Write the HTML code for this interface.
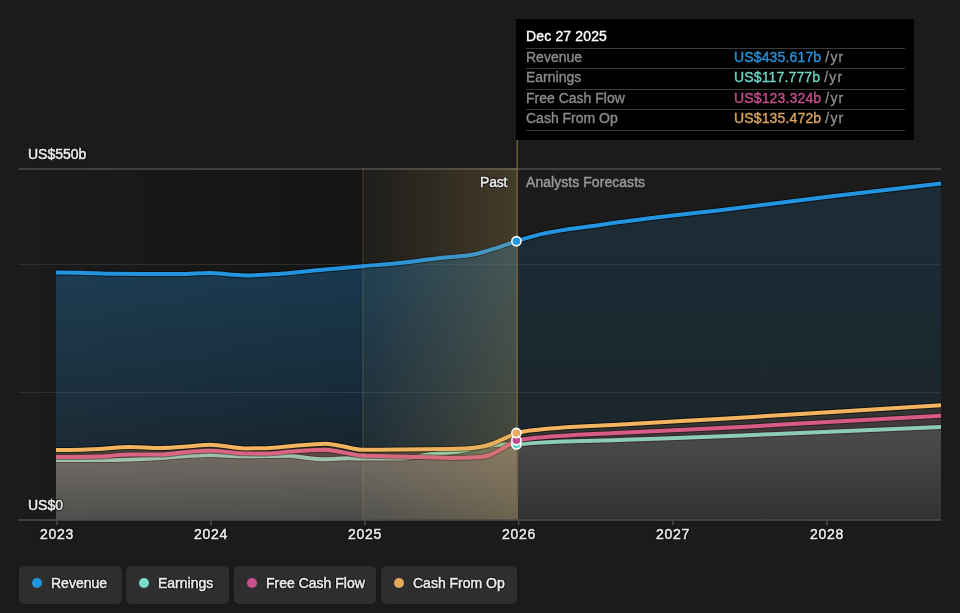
<!DOCTYPE html>
<html><head><meta charset="utf-8">
<style>
html,body{margin:0;padding:0;}
body{width:960px;height:613px;background:#1b1b1b;position:relative;overflow:hidden;font-family:"Liberation Sans",sans-serif;}
.t{position:absolute;white-space:nowrap;line-height:1;will-change:transform;}
.tip div{-webkit-text-stroke-width:0.35px;}
.ax{color:#ececec;font-size:14px;text-shadow:1px 0 1px #000,-1px 0 1px #000,0 1px 1px #000,0 -1px 1px #000;-webkit-text-stroke:0.5px #ececec;}
.yr4{letter-spacing:0.7px;}
.tip{position:absolute;left:516px;top:19px;width:398px;height:121px;background:#000;}
.tip .sep{position:absolute;left:10px;width:379px;height:1.5px;background:#3a3a3a;}
.tip .lab{will-change:transform;position:absolute;left:10px;color:#8c8c8c;font-size:14px;line-height:1;}
.tip .val{will-change:transform;position:absolute;left:218px;font-size:14px;line-height:1;letter-spacing:0.15px;}
.tip .yr{color:#8c8c8c;letter-spacing:1.2px;}
.leg{position:absolute;top:566px;height:38px;background:#2e2e2e;border-radius:5px;}
.leg .dot{position:absolute;left:13px;top:11.5px;width:10px;height:10px;border-radius:50%;}
.leg .lt{will-change:transform;position:absolute;left:32px;top:9.5px;color:#ececec;font-size:14px;line-height:1;-webkit-text-stroke:0.5px #ececec;text-shadow:1px 0 1px #000,-1px 0 1px #000,0 1px 1px #000,0 -1px 1px #000;}
</style></head><body>
<svg width="960" height="613" viewBox="0 0 960 613" style="position:absolute;left:0;top:0">
<defs>
<linearGradient id="gp_rev" gradientUnits="userSpaceOnUse" x1="0" y1="241" x2="0" y2="520"><stop offset="0" stop-color="#2394df" stop-opacity="0.310"/><stop offset="1" stop-color="#2394df" stop-opacity="0.070"/></linearGradient>
<linearGradient id="gf_rev" gradientUnits="userSpaceOnUse" x1="0" y1="241" x2="0" y2="520"><stop offset="0" stop-color="#2394df" stop-opacity="0.130"/><stop offset="1" stop-color="#2394df" stop-opacity="0.070"/></linearGradient>
<linearGradient id="gp_ern" gradientUnits="userSpaceOnUse" x1="0" y1="440" x2="0" y2="520"><stop offset="0" stop-color="#78dcc8" stop-opacity="0.300"/><stop offset="1" stop-color="#78dcc8" stop-opacity="0.170"/></linearGradient>
<linearGradient id="gf_ern" gradientUnits="userSpaceOnUse" x1="0" y1="440" x2="0" y2="520"><stop offset="0" stop-color="#78dcc8" stop-opacity="0.120"/><stop offset="1" stop-color="#78dcc8" stop-opacity="0.030"/></linearGradient>
<linearGradient id="gp_fcf" gradientUnits="userSpaceOnUse" x1="0" y1="436" x2="0" y2="520"><stop offset="0" stop-color="#d4508e" stop-opacity="0.200"/><stop offset="1" stop-color="#d4508e" stop-opacity="0.100"/></linearGradient>
<linearGradient id="gf_fcf" gradientUnits="userSpaceOnUse" x1="0" y1="436" x2="0" y2="520"><stop offset="0" stop-color="#d4508e" stop-opacity="0.100"/><stop offset="1" stop-color="#d4508e" stop-opacity="0.040"/></linearGradient>
<linearGradient id="gp_cfo" gradientUnits="userSpaceOnUse" x1="0" y1="432" x2="0" y2="520"><stop offset="0" stop-color="#f2b45e" stop-opacity="0.230"/><stop offset="1" stop-color="#f2b45e" stop-opacity="0.100"/></linearGradient>
<linearGradient id="gf_cfo" gradientUnits="userSpaceOnUse" x1="0" y1="432" x2="0" y2="520"><stop offset="0" stop-color="#f2b45e" stop-opacity="0.100"/><stop offset="1" stop-color="#f2b45e" stop-opacity="0.050"/></linearGradient>
<linearGradient id="darkpast" x1="0" y1="0" x2="1" y2="0"><stop offset="0" stop-color="#000" stop-opacity="0"/><stop offset="1" stop-color="#000" stop-opacity="0.27"/></linearGradient>
<linearGradient id="goldpast" x1="0" y1="0" x2="1" y2="0"><stop offset="0" stop-color="#c8a050" stop-opacity="0.015"/><stop offset="1" stop-color="#c8a050" stop-opacity="0.24"/></linearGradient>
</defs>
<rect x="18" y="168" width="345" height="352" fill="url(#darkpast)"/>
<rect x="18.5" y="264" width="922.5" height="1" fill="#2e2e2e"/>
<rect x="18.5" y="392" width="922.5" height="1" fill="#2e2e2e"/>
<rect x="18.5" y="168.2" width="922.5" height="1.6" fill="#4a4a4a"/>
<path d="M56.00,272.50 C64.00,272.57 72.00,272.65 80.00,272.80 C91.67,273.02 103.33,273.73 115.00,273.80 C136.67,273.93 158.33,274.00 180.00,274.00 C190.00,274.00 200.00,273.00 210.00,273.00 C216.67,273.00 223.33,274.06 230.00,274.50 C235.67,274.88 241.33,275.50 247.00,275.50 C258.00,275.50 269.00,274.58 280.00,273.80 C293.33,272.85 306.67,271.22 320.00,270.00 C334.33,268.68 348.67,267.45 363.00,266.20 C375.33,265.12 387.67,264.29 400.00,263.00 C413.33,261.60 426.67,259.53 440.00,258.00 C451.67,256.66 463.33,256.77 475.00,254.30 C480.67,253.10 486.33,251.16 492.00,249.40 C500.17,246.86 508.33,243.93 516.50,241.00 L516.5,520 L56.0,520 Z" fill="url(#gp_rev)"/>
<path d="M516.50,241.00 C524.33,238.66 532.17,236.33 540.00,234.40 C560.00,229.48 580.00,227.88 600.00,225.00 C620.00,222.12 640.00,219.57 660.00,217.10 C680.00,214.63 700.00,212.56 720.00,210.20 C756.67,205.87 793.33,201.03 830.00,196.60 C867.00,192.13 904.00,187.81 941.00,183.50 L941.0,520 L516.5,520 Z" fill="url(#gf_rev)"/>
<path d="M56.00,272.50 C64.00,272.57 72.00,272.65 80.00,272.80 C91.67,273.02 103.33,273.73 115.00,273.80 C136.67,273.93 158.33,274.00 180.00,274.00 C190.00,274.00 200.00,273.00 210.00,273.00 C216.67,273.00 223.33,274.06 230.00,274.50 C235.67,274.88 241.33,275.50 247.00,275.50 C258.00,275.50 269.00,274.58 280.00,273.80 C293.33,272.85 306.67,271.22 320.00,270.00 C334.33,268.68 348.67,267.45 363.00,266.20 C375.33,265.12 387.67,264.29 400.00,263.00 C413.33,261.60 426.67,259.53 440.00,258.00 C451.67,256.66 463.33,256.77 475.00,254.30 C480.67,253.10 486.33,251.16 492.00,249.40 C500.17,246.86 508.33,243.93 516.50,241.00 L516.50,241.00 C524.33,238.66 532.17,236.33 540.00,234.40 C560.00,229.48 580.00,227.88 600.00,225.00 C620.00,222.12 640.00,219.57 660.00,217.10 C680.00,214.63 700.00,212.56 720.00,210.20 C756.67,205.87 793.33,201.03 830.00,196.60 C867.00,192.13 904.00,187.81 941.00,183.50" fill="none" stroke="#000" stroke-opacity="0.55" stroke-width="6.0" stroke-linejoin="round"/>
<path d="M56.00,272.50 C64.00,272.57 72.00,272.65 80.00,272.80 C91.67,273.02 103.33,273.73 115.00,273.80 C136.67,273.93 158.33,274.00 180.00,274.00 C190.00,274.00 200.00,273.00 210.00,273.00 C216.67,273.00 223.33,274.06 230.00,274.50 C235.67,274.88 241.33,275.50 247.00,275.50 C258.00,275.50 269.00,274.58 280.00,273.80 C293.33,272.85 306.67,271.22 320.00,270.00 C334.33,268.68 348.67,267.45 363.00,266.20 C375.33,265.12 387.67,264.29 400.00,263.00 C413.33,261.60 426.67,259.53 440.00,258.00 C451.67,256.66 463.33,256.77 475.00,254.30 C480.67,253.10 486.33,251.16 492.00,249.40 C500.17,246.86 508.33,243.93 516.50,241.00 L516.50,241.00 C524.33,238.66 532.17,236.33 540.00,234.40 C560.00,229.48 580.00,227.88 600.00,225.00 C620.00,222.12 640.00,219.57 660.00,217.10 C680.00,214.63 700.00,212.56 720.00,210.20 C756.67,205.87 793.33,201.03 830.00,196.60 C867.00,192.13 904.00,187.81 941.00,183.50" fill="none" stroke="#2394df" stroke-width="4.0" stroke-linejoin="round"/>
<path d="M56.00,460.00 C70.67,460.00 85.33,460.00 100.00,460.00 C110.00,460.00 120.00,459.83 130.00,459.50 C140.00,459.17 150.00,458.62 160.00,458.00 C170.00,457.38 180.00,456.33 190.00,455.80 C196.67,455.44 203.33,455.00 210.00,455.00 C221.67,455.00 233.33,456.30 245.00,456.30 C260.00,456.30 275.00,455.80 290.00,455.80 C293.33,455.80 296.67,456.63 300.00,457.00 C308.33,457.92 316.67,459.20 325.00,459.20 C333.33,459.20 341.67,458.30 350.00,458.30 C354.00,458.30 358.00,458.60 362.00,458.60 C374.67,458.60 387.33,458.60 400.00,458.60 C410.00,458.60 420.00,455.52 430.00,454.30 C440.00,453.08 450.00,452.77 460.00,451.30 C470.00,449.83 480.00,446.63 490.00,445.50 C495.00,444.93 500.00,444.40 505.00,444.40 C508.83,444.40 512.67,444.40 516.50,444.40 L516.5,520 L56.0,520 Z" fill="url(#gp_ern)"/>
<path d="M516.50,444.40 C521.00,443.96 525.50,443.52 530.00,443.20 C562.00,440.93 594.00,440.96 626.00,439.80 C662.67,438.47 699.33,437.18 736.00,435.70 C757.33,434.84 778.67,433.91 800.00,433.00 C847.00,431.00 894.00,428.95 941.00,426.90 L941.0,520 L516.5,520 Z" fill="url(#gf_ern)"/>
<path d="M56.00,460.00 C70.67,460.00 85.33,460.00 100.00,460.00 C110.00,460.00 120.00,459.83 130.00,459.50 C140.00,459.17 150.00,458.62 160.00,458.00 C170.00,457.38 180.00,456.33 190.00,455.80 C196.67,455.44 203.33,455.00 210.00,455.00 C221.67,455.00 233.33,456.30 245.00,456.30 C260.00,456.30 275.00,455.80 290.00,455.80 C293.33,455.80 296.67,456.63 300.00,457.00 C308.33,457.92 316.67,459.20 325.00,459.20 C333.33,459.20 341.67,458.30 350.00,458.30 C354.00,458.30 358.00,458.60 362.00,458.60 C374.67,458.60 387.33,458.60 400.00,458.60 C410.00,458.60 420.00,455.52 430.00,454.30 C440.00,453.08 450.00,452.77 460.00,451.30 C470.00,449.83 480.00,446.63 490.00,445.50 C495.00,444.93 500.00,444.40 505.00,444.40 C508.83,444.40 512.67,444.40 516.50,444.40 L516.50,444.40 C521.00,443.96 525.50,443.52 530.00,443.20 C562.00,440.93 594.00,440.96 626.00,439.80 C662.67,438.47 699.33,437.18 736.00,435.70 C757.33,434.84 778.67,433.91 800.00,433.00 C847.00,431.00 894.00,428.95 941.00,426.90" fill="none" stroke="#000" stroke-opacity="0.55" stroke-width="6.0" stroke-linejoin="round"/>
<path d="M56.00,460.00 C70.67,460.00 85.33,460.00 100.00,460.00 C110.00,460.00 120.00,459.83 130.00,459.50 C140.00,459.17 150.00,458.62 160.00,458.00 C170.00,457.38 180.00,456.33 190.00,455.80 C196.67,455.44 203.33,455.00 210.00,455.00 C221.67,455.00 233.33,456.30 245.00,456.30 C260.00,456.30 275.00,455.80 290.00,455.80 C293.33,455.80 296.67,456.63 300.00,457.00 C308.33,457.92 316.67,459.20 325.00,459.20 C333.33,459.20 341.67,458.30 350.00,458.30 C354.00,458.30 358.00,458.60 362.00,458.60 C374.67,458.60 387.33,458.60 400.00,458.60 C410.00,458.60 420.00,455.52 430.00,454.30 C440.00,453.08 450.00,452.77 460.00,451.30 C470.00,449.83 480.00,446.63 490.00,445.50 C495.00,444.93 500.00,444.40 505.00,444.40 C508.83,444.40 512.67,444.40 516.50,444.40 L516.50,444.40 C521.00,443.96 525.50,443.52 530.00,443.20 C562.00,440.93 594.00,440.96 626.00,439.80 C662.67,438.47 699.33,437.18 736.00,435.70 C757.33,434.84 778.67,433.91 800.00,433.00 C847.00,431.00 894.00,428.95 941.00,426.90" fill="none" stroke="#78dcc8" stroke-width="4.0" stroke-linejoin="round"/>
<path d="M56.00,457.00 C70.67,456.92 85.33,456.83 100.00,456.50 C110.00,456.27 120.00,454.50 130.00,454.50 C140.00,454.50 150.00,454.50 160.00,454.50 C170.00,454.50 180.00,452.34 190.00,451.70 C196.67,451.27 203.33,450.80 210.00,450.80 C221.67,450.80 233.33,453.10 245.00,453.30 C252.67,453.43 260.33,453.50 268.00,453.50 C275.33,453.50 282.67,452.05 290.00,451.50 C301.67,450.62 313.33,449.70 325.00,449.70 C330.00,449.70 335.00,450.94 340.00,451.70 C347.33,452.81 354.67,455.25 362.00,455.60 C374.67,456.20 387.33,456.18 400.00,456.50 C416.67,456.93 433.33,457.90 450.00,457.90 C460.00,457.90 470.00,457.60 480.00,457.00 C483.33,456.80 486.67,456.18 490.00,455.00 C493.33,453.82 496.67,451.69 500.00,449.90 C505.50,446.95 511.00,443.62 516.50,440.30 L516.5,520 L56.0,520 Z" fill="url(#gp_fcf)"/>
<path d="M516.50,440.30 C521.00,439.72 525.50,439.13 530.00,438.60 C562.00,434.82 594.00,434.30 626.00,432.50 C662.67,430.43 699.33,429.15 736.00,427.20 C757.33,426.06 778.67,424.79 800.00,423.60 C847.00,420.97 894.00,418.38 941.00,415.80 L941.0,520 L516.5,520 Z" fill="url(#gf_fcf)"/>
<path d="M56.00,457.00 C70.67,456.92 85.33,456.83 100.00,456.50 C110.00,456.27 120.00,454.50 130.00,454.50 C140.00,454.50 150.00,454.50 160.00,454.50 C170.00,454.50 180.00,452.34 190.00,451.70 C196.67,451.27 203.33,450.80 210.00,450.80 C221.67,450.80 233.33,453.10 245.00,453.30 C252.67,453.43 260.33,453.50 268.00,453.50 C275.33,453.50 282.67,452.05 290.00,451.50 C301.67,450.62 313.33,449.70 325.00,449.70 C330.00,449.70 335.00,450.94 340.00,451.70 C347.33,452.81 354.67,455.25 362.00,455.60 C374.67,456.20 387.33,456.18 400.00,456.50 C416.67,456.93 433.33,457.90 450.00,457.90 C460.00,457.90 470.00,457.60 480.00,457.00 C483.33,456.80 486.67,456.18 490.00,455.00 C493.33,453.82 496.67,451.69 500.00,449.90 C505.50,446.95 511.00,443.62 516.50,440.30 L516.50,440.30 C521.00,439.72 525.50,439.13 530.00,438.60 C562.00,434.82 594.00,434.30 626.00,432.50 C662.67,430.43 699.33,429.15 736.00,427.20 C757.33,426.06 778.67,424.79 800.00,423.60 C847.00,420.97 894.00,418.38 941.00,415.80" fill="none" stroke="#000" stroke-opacity="0.55" stroke-width="6.0" stroke-linejoin="round"/>
<path d="M56.00,457.00 C70.67,456.92 85.33,456.83 100.00,456.50 C110.00,456.27 120.00,454.50 130.00,454.50 C140.00,454.50 150.00,454.50 160.00,454.50 C170.00,454.50 180.00,452.34 190.00,451.70 C196.67,451.27 203.33,450.80 210.00,450.80 C221.67,450.80 233.33,453.10 245.00,453.30 C252.67,453.43 260.33,453.50 268.00,453.50 C275.33,453.50 282.67,452.05 290.00,451.50 C301.67,450.62 313.33,449.70 325.00,449.70 C330.00,449.70 335.00,450.94 340.00,451.70 C347.33,452.81 354.67,455.25 362.00,455.60 C374.67,456.20 387.33,456.18 400.00,456.50 C416.67,456.93 433.33,457.90 450.00,457.90 C460.00,457.90 470.00,457.60 480.00,457.00 C483.33,456.80 486.67,456.18 490.00,455.00 C493.33,453.82 496.67,451.69 500.00,449.90 C505.50,446.95 511.00,443.62 516.50,440.30 L516.50,440.30 C521.00,439.72 525.50,439.13 530.00,438.60 C562.00,434.82 594.00,434.30 626.00,432.50 C662.67,430.43 699.33,429.15 736.00,427.20 C757.33,426.06 778.67,424.79 800.00,423.60 C847.00,420.97 894.00,418.38 941.00,415.80" fill="none" stroke="#d4508e" stroke-width="4.0" stroke-linejoin="round"/>
<path d="M56.00,450.00 C70.67,449.80 85.33,449.60 100.00,448.90 C110.00,448.42 120.00,447.00 130.00,447.00 C140.00,447.00 150.00,448.00 160.00,448.00 C170.00,448.00 180.00,447.01 190.00,446.30 C196.67,445.83 203.33,444.70 210.00,444.70 C221.67,444.70 233.33,448.40 245.00,448.40 C252.33,448.40 259.67,448.33 267.00,448.20 C274.67,448.06 282.33,446.91 290.00,446.30 C301.67,445.37 313.33,443.70 325.00,443.70 C330.00,443.70 335.00,444.94 340.00,445.70 C347.33,446.82 354.67,449.70 362.00,449.70 C374.67,449.70 387.33,449.58 400.00,449.50 C416.67,449.39 433.33,449.37 450.00,449.10 C459.33,448.95 468.67,448.50 478.00,447.30 C482.00,446.79 486.00,445.82 490.00,444.50 C493.33,443.40 496.67,441.82 500.00,440.40 C505.50,438.07 511.00,435.53 516.50,433.00 L516.5,520 L56.0,520 Z" fill="url(#gp_cfo)"/>
<path d="M516.50,433.00 C521.00,432.10 525.50,431.20 530.00,430.60 C562.00,426.33 594.00,426.18 626.00,424.20 C662.67,421.93 699.33,420.25 736.00,418.00 C757.33,416.69 778.67,415.25 800.00,413.90 C847.00,410.93 894.00,408.12 941.00,405.30 L941.0,520 L516.5,520 Z" fill="url(#gf_cfo)"/>
<path d="M56.00,450.00 C70.67,449.80 85.33,449.60 100.00,448.90 C110.00,448.42 120.00,447.00 130.00,447.00 C140.00,447.00 150.00,448.00 160.00,448.00 C170.00,448.00 180.00,447.01 190.00,446.30 C196.67,445.83 203.33,444.70 210.00,444.70 C221.67,444.70 233.33,448.40 245.00,448.40 C252.33,448.40 259.67,448.33 267.00,448.20 C274.67,448.06 282.33,446.91 290.00,446.30 C301.67,445.37 313.33,443.70 325.00,443.70 C330.00,443.70 335.00,444.94 340.00,445.70 C347.33,446.82 354.67,449.70 362.00,449.70 C374.67,449.70 387.33,449.58 400.00,449.50 C416.67,449.39 433.33,449.37 450.00,449.10 C459.33,448.95 468.67,448.50 478.00,447.30 C482.00,446.79 486.00,445.82 490.00,444.50 C493.33,443.40 496.67,441.82 500.00,440.40 C505.50,438.07 511.00,435.53 516.50,433.00 L516.50,433.00 C521.00,432.10 525.50,431.20 530.00,430.60 C562.00,426.33 594.00,426.18 626.00,424.20 C662.67,421.93 699.33,420.25 736.00,418.00 C757.33,416.69 778.67,415.25 800.00,413.90 C847.00,410.93 894.00,408.12 941.00,405.30" fill="none" stroke="#000" stroke-opacity="0.55" stroke-width="6.0" stroke-linejoin="round"/>
<path d="M56.00,450.00 C70.67,449.80 85.33,449.60 100.00,448.90 C110.00,448.42 120.00,447.00 130.00,447.00 C140.00,447.00 150.00,448.00 160.00,448.00 C170.00,448.00 180.00,447.01 190.00,446.30 C196.67,445.83 203.33,444.70 210.00,444.70 C221.67,444.70 233.33,448.40 245.00,448.40 C252.33,448.40 259.67,448.33 267.00,448.20 C274.67,448.06 282.33,446.91 290.00,446.30 C301.67,445.37 313.33,443.70 325.00,443.70 C330.00,443.70 335.00,444.94 340.00,445.70 C347.33,446.82 354.67,449.70 362.00,449.70 C374.67,449.70 387.33,449.58 400.00,449.50 C416.67,449.39 433.33,449.37 450.00,449.10 C459.33,448.95 468.67,448.50 478.00,447.30 C482.00,446.79 486.00,445.82 490.00,444.50 C493.33,443.40 496.67,441.82 500.00,440.40 C505.50,438.07 511.00,435.53 516.50,433.00 L516.50,433.00 C521.00,432.10 525.50,431.20 530.00,430.60 C562.00,426.33 594.00,426.18 626.00,424.20 C662.67,421.93 699.33,420.25 736.00,418.00 C757.33,416.69 778.67,415.25 800.00,413.90 C847.00,410.93 894.00,408.12 941.00,405.30" fill="none" stroke="#f2b45e" stroke-width="4.0" stroke-linejoin="round"/>
<rect x="363" y="168" width="154" height="352" fill="url(#goldpast)"/>
<rect x="362.2" y="168" width="1.6" height="352" fill="#c8a050" fill-opacity="0.18"/>
<rect x="516.5" y="140" width="1.5" height="380" fill="#8a7448" fill-opacity="0.72"/>
<rect x="18.5" y="519.2" width="922.5" height="1.6" fill="#4a4a4a"/>
<rect x="56.2" y="520" width="1.5" height="5" fill="#4a4a4a"/>
<rect x="210.2" y="520" width="1.5" height="5" fill="#4a4a4a"/>
<rect x="364.2" y="520" width="1.5" height="5" fill="#4a4a4a"/>
<rect x="517.8" y="520" width="1.5" height="5" fill="#4a4a4a"/>
<rect x="672.2" y="520" width="1.5" height="5" fill="#4a4a4a"/>
<rect x="826.2" y="520" width="1.5" height="5" fill="#4a4a4a"/>
<g stroke="#fff" stroke-width="1.6">
<circle cx="516.4" cy="444.4" r="4.6" fill="#50d6c2"/>
<circle cx="516.4" cy="440.3" r="4.6" fill="#c6488e"/>
<circle cx="516.4" cy="433.0" r="4.6" fill="#e8ae5e"/>
<circle cx="516.4" cy="241.2" r="4.6" fill="#2394df"/>
</g>
</svg>
<div class="t ax" style="left:28px;top:147px;">US$550b</div>
<div class="t ax" style="left:28px;top:498px;">US$0</div>
<div class="t ax" style="left:40px;top:527px;letter-spacing:0.7px;">2023</div>
<div class="t ax" style="left:194px;top:527px;letter-spacing:0.7px;">2024</div>
<div class="t ax" style="left:348px;top:527px;letter-spacing:0.7px;">2025</div>
<div class="t ax" style="left:502px;top:527px;letter-spacing:0.7px;">2026</div>
<div class="t ax" style="left:656px;top:527px;letter-spacing:0.7px;">2027</div>
<div class="t ax" style="left:810px;top:527px;letter-spacing:0.7px;">2028</div>
<div class="t ax" style="left:480px;top:175px;letter-spacing:-0.2px;">Past</div>
<div class="t" style="left:526px;top:175px;color:#9a9a9a;font-size:14px;-webkit-text-stroke-width:0.4px;letter-spacing:0.05px;">Analysts Forecasts</div>
<div class="tip">
  <div class="t" style="left:10px;top:10px;color:#fff;font-size:14px;letter-spacing:0.15px;-webkit-text-stroke:0.4px #fff;">Dec 27 2025</div>
  <div class="sep" style="top:28.8px"></div>
  <div class="lab" style="top:31px">Revenue</div><div class="val" style="top:31px;color:#2394df">US$435.617b <span class="yr">/yr</span></div>
  <div class="sep" style="top:48.7px"></div>
  <div class="lab" style="top:51px">Earnings</div><div class="val" style="top:51px;color:#6fd6c4">US$117.777b <span class="yr">/yr</span></div>
  <div class="sep" style="top:69.8px"></div>
  <div class="lab" style="top:72px">Free Cash Flow</div><div class="val" style="top:72px;color:#c84f8e">US$123.324b <span class="yr">/yr</span></div>
  <div class="sep" style="top:89.7px"></div>
  <div class="lab" style="top:92px">Cash From Op</div><div class="val" style="top:92px;color:#dca55c">US$135.472b <span class="yr">/yr</span></div>
  <div class="sep" style="top:110.7px"></div>
</div>
<div class="leg" style="left:19px;width:103px;"><div class="dot" style="background:#2394df"></div><div class="lt">Revenue</div></div>
<div class="leg" style="left:126px;width:103px;"><div class="dot" style="background:#78dcc8"></div><div class="lt">Earnings</div></div>
<div class="leg" style="left:234px;width:142px;"><div class="dot" style="background:#c8508c"></div><div class="lt">Free Cash Flow</div></div>
<div class="leg" style="left:381px;width:136px;"><div class="dot" style="background:#e6aa5e"></div><div class="lt">Cash From Op</div></div>
</body></html>
